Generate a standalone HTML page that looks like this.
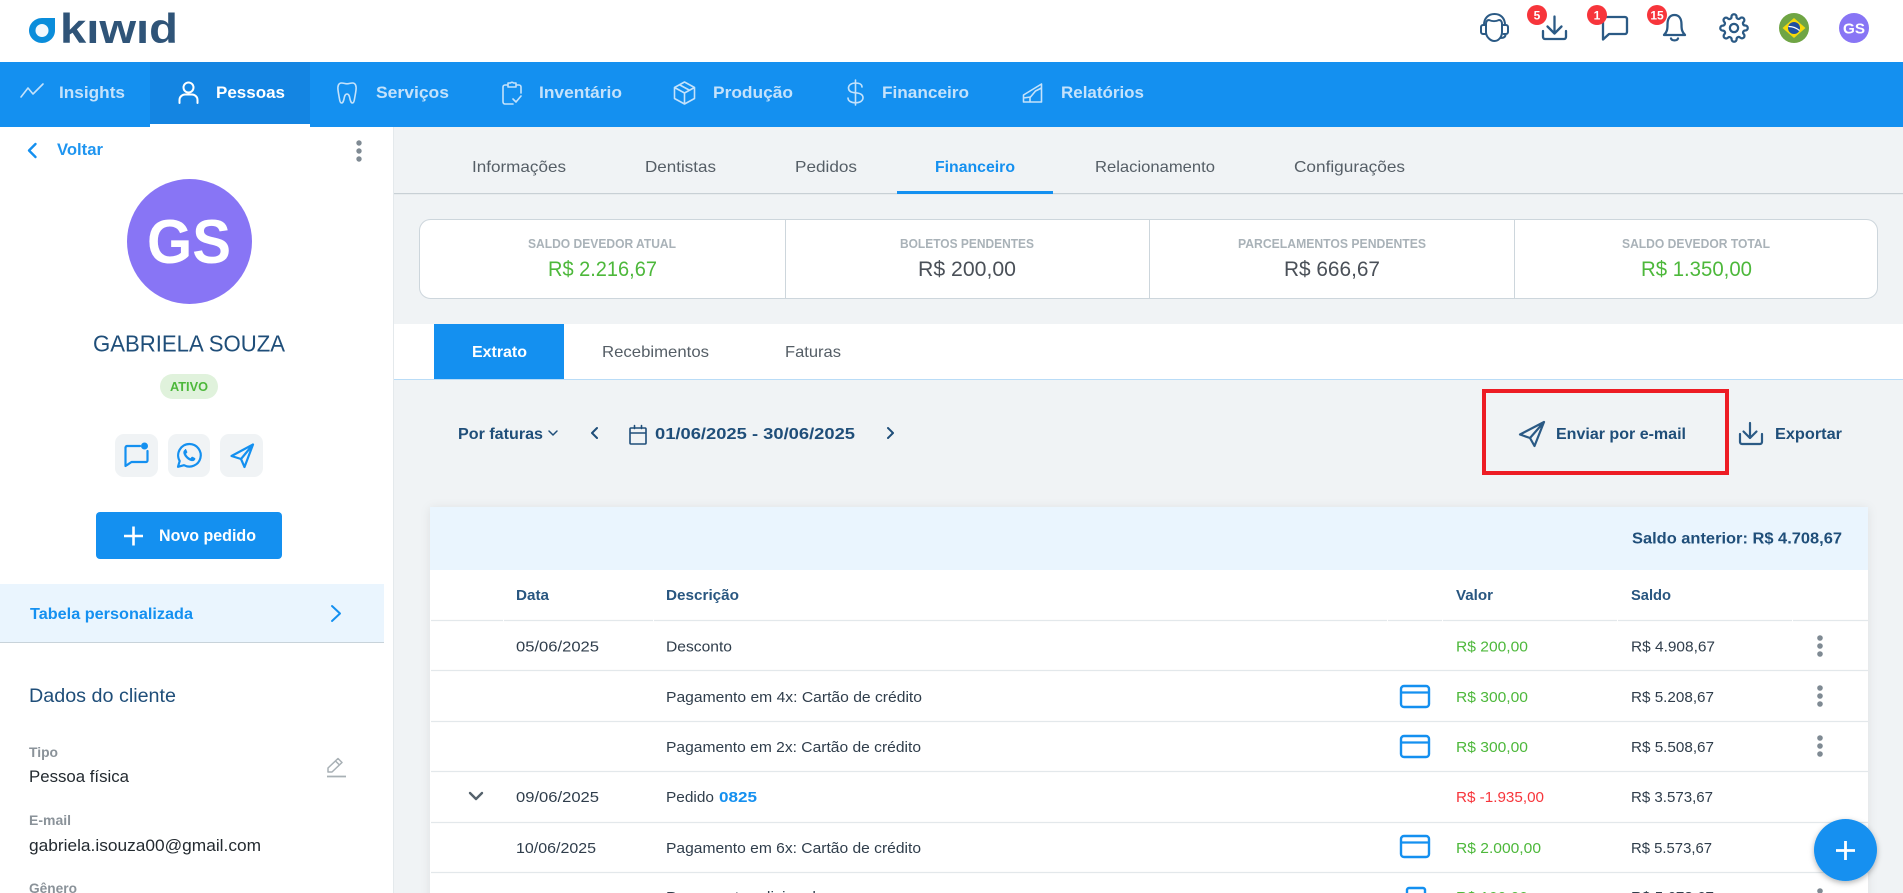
<!DOCTYPE html>
<html lang="pt-BR"><head><meta charset="utf-8"><title>Kiwid</title>
<style>
html,body{margin:0;padding:0;width:1903px;height:893px;overflow:hidden;background:#f0f3f5}
svg{display:block;font-family:"Liberation Sans",Arial,sans-serif}
.nav{font-size:17px;font-weight:700;fill:#c4e2fb}
.tab{font-size:16px;fill:#555e66}
.lab{font-size:12.5px;font-weight:700;fill:#a9b2b8}
.val{font-size:21px;fill:#4a5058}
.g{fill:#4db83b}
.nb{font-size:16px;font-weight:700;fill:#1f4e79}
.th{font-size:15px;font-weight:700;fill:#285680}
.td{font-size:15px;fill:#2f3d4b}
.tv{font-size:15px;fill:#4db83b}
.sl{font-size:13.5px;font-weight:700;fill:#8a9299}
.sv{font-size:17px;fill:#232a30}
.nic{fill:none;stroke:#c4e2fb;stroke-width:1.6;stroke-linecap:round;stroke-linejoin:round}
.tic{fill:none;stroke:#2b5a85;stroke-width:2.3;stroke-linecap:round;stroke-linejoin:round}
.bic{fill:none;stroke:#1490f0;stroke-width:2.2;stroke-linecap:round;stroke-linejoin:round}
.bdg{font-size:12px;font-weight:700;fill:#fff;text-anchor:middle}
.ln{stroke:#e3e8eb;stroke-width:1.2}
</style></head><body>
<svg width="1903" height="893" viewBox="0 0 1903 893" xmlns="http://www.w3.org/2000/svg">
<defs>
<filter id="sh" x="-5%" y="-5%" width="110%" height="110%"><feDropShadow dx="0" dy="1" stdDeviation="5" flood-color="#000" flood-opacity=".08"/></filter>
<filter id="fs" x="-30%" y="-30%" width="160%" height="160%"><feDropShadow dx="0" dy="2" stdDeviation="3" flood-color="#000" flood-opacity=".3"/></filter>
<g id="card"><rect x="1401" y="0" width="28" height="21" rx="3" fill="none" stroke="#1490f0" stroke-width="2.4"/><path d="M1401 6.500h28" stroke="#1490f0" stroke-width="2.200"/></g>
<g id="keb" fill="#7f8a93"><circle cx="1820" cy="0" r="2.800"/><circle cx="1820" cy="8" r="2.800"/><circle cx="1820" cy="16" r="2.800"/></g>
</defs>

<!-- base -->
<rect width="1903" height="893" fill="#f0f3f5"/>
<rect width="1903" height="62" fill="#fff"/>

<!-- logo -->
<path d="M42 18C35 18 29 23.500 29 30.500S35 43 42 43s13-5.500 13-12.500V18z" fill="#0a8ddb"/>
<circle cx="42" cy="30.500" r="6.500" fill="#f2f8fd"/>
<text x="60" y="43" font-size="42" font-weight="700" fill="#2f5478" textLength="118" lengthAdjust="spacingAndGlyphs">kıwıd</text>

<!-- top icons -->
<g class="tic">
<path d="M1484 25c0-7 4.500-11 10.500-11s10.500 4 10.500 11" stroke-width="2"/>
<path d="M1486 24c0-3 1.500-4 3-4 3 1.500 7 1.500 10 0 1.500 0 3 1 3 4v8c0 5-3.500 9-7.500 9s-8.500-4-8.500-9z" stroke-width="2"/>
<path d="M1485.500 25h-2.500a2 2 0 0 0-2 2v5a2 2 0 0 0 2 2h2.500M1503.500 25h2.500a2 2 0 0 1 2 2v5a2 2 0 0 1-2 2h-2.500M1505.500 34.500c0 2.500-2 3.500-5 3.500" stroke-width="2"/>
<path d="M1554.500 16.500V33M1547.500 26.500l7 7 7-7M1543 31v6a2 2 0 0 0 2 2h19a2 2 0 0 0 2-2v-6"/>
<path d="M1603 39.500V19a2 2 0 0 1 2-2h20a2 2 0 0 1 2 2v13a2 2 0 0 1-2 2h-16z"/>
<path d="M1664 35c3-3 3.500-5.500 3.500-10.500 0-6 2.500-9.500 7-9.500s7 3.500 7 9.500c0 5 .5 7.500 3.500 10.500zM1671 38.500c1 2.500 6 2.500 7 0"/>
<g transform="translate(1719 13) scale(1.25)" stroke-width="1.800"><circle cx="12" cy="12" r="3.300"/><path d="M19.400 15a1.650 1.650 0 0 0 .33 1.820l.06.06a2 2 0 0 1 0 2.830 2 2 0 0 1-2.830 0l-.06-.06a1.650 1.650 0 0 0-1.820-.33 1.650 1.650 0 0 0-1 1.510V21a2 2 0 0 1-2 2 2 2 0 0 1-2-2v-.09A1.650 1.650 0 0 0 9 19.400a1.650 1.650 0 0 0-1.820.33l-.06.06a2 2 0 0 1-2.830 0 2 2 0 0 1 0-2.830l.06-.06a1.650 1.650 0 0 0 .33-1.820 1.650 1.650 0 0 0-1.510-1H3a2 2 0 0 1-2-2 2 2 0 0 1 2-2h.09A1.650 1.650 0 0 0 4.600 9a1.650 1.650 0 0 0-.33-1.820l-.06-.06a2 2 0 0 1 0-2.830 2 2 0 0 1 2.830 0l.06.06a1.650 1.650 0 0 0 1.820.33H9a1.650 1.650 0 0 0 1-1.510V3a2 2 0 0 1 2-2 2 2 0 0 1 2 2v.09a1.650 1.650 0 0 0 1 1.510 1.650 1.650 0 0 0 1.820-.33l.06-.06a2 2 0 0 1 2.830 0 2 2 0 0 1 0 2.830l-.06.06a1.650 1.650 0 0 0-.33 1.820V9a1.650 1.650 0 0 0 1.510 1H21a2 2 0 0 1 2 2 2 2 0 0 1-2 2h-.09a1.650 1.650 0 0 0-1.510 1z"/></g>
</g>
<circle cx="1537" cy="15" r="10" fill="#f7353b"/><text class="bdg" x="1537" y="19.500">5</text>
<circle cx="1597" cy="15" r="10" fill="#f7353b"/><text class="bdg" x="1597" y="19.500">1</text>
<circle cx="1657" cy="15" r="10" fill="#f7353b"/><text class="bdg" x="1657" y="19.500">15</text>
<circle cx="1794" cy="28" r="15" fill="#6fa544"/><path d="M1794 18l11.500 10-11.500 10-11.500-10z" fill="#f5d90a"/><circle cx="1794" cy="28" r="6" fill="#1f4fa0"/><path d="M1788.500 26.500c4 0 8 1.500 11 4" stroke="#fff" stroke-width="1.300" fill="none"/>
<circle cx="1854" cy="28" r="15" fill="#8875f5"/><text x="1843" y="33.500" font-size="15" font-weight="700" fill="#fff" textLength="22" lengthAdjust="spacingAndGlyphs">GS</text>

<!-- nav -->
<rect y="62" width="1903" height="65" fill="#1490f0"/>
<rect x="150" y="62" width="160" height="65" fill="#1485e2"/>
<rect x="150" y="124" width="160" height="3" fill="#fff"/>
<path class="nic" d="M21 97l7-9 5 6 10-10" stroke-width="2"/>
<text class="nav" x="59" y="98" textLength="66" lengthAdjust="spacingAndGlyphs">Insights</text>
<g fill="none" stroke="#fff" stroke-width="2" stroke-linecap="round"><circle cx="188.500" cy="87.500" r="5"/><path d="M179.500 103v-3a5.500 5.500 0 0 1 5.500-5.500h7a5.500 5.500 0 0 1 5.500 5.500v3"/></g>
<text x="216" y="98" font-size="17" font-weight="700" fill="#fff" textLength="69" lengthAdjust="spacingAndGlyphs">Pessoas</text>
<path class="nic" d="M342.500 83c-3 0-4 3-3.500 7 .5 4 1 6 1.500 9 .3 2 .8 4 2 4 1.500 0 2-2 2.500-4 .4-2 .8-5 3-5s2.600 3 3 5c.5 2 1 4 2.500 4 1.200 0 1.700-2 2-4 .5-3 1-5 1.500-9 .5-4-.5-7-3.500-7-2.500 0-3 .8-5.500.8s-3-.8-5.500-.8z" transform="translate(-1)"/>
<text class="nav" x="376" y="98" textLength="73" lengthAdjust="spacingAndGlyphs">Serviços</text>
<path class="nic" d="M508 85h-3a2 2 0 0 0-2 2v15a2 2 0 0 0 2 2h8M516 85h3a2 2 0 0 1 2 2v6M508 85v-2h2.500a2 2 0 0 1 3 0h2.500v4h-8zM513 99l3 3 5-6"/>
<text class="nav" x="539" y="98" textLength="83" lengthAdjust="spacingAndGlyphs">Inventário</text>
<path class="nic" d="M684.500 82l10 5.500v11l-10 5.500-10-5.500v-11zM674.500 87.500l10 5.500 10-5.500M684.500 93v11M679.500 84.750l10 5.500"/>
<text class="nav" x="713" y="98" textLength="80" lengthAdjust="spacingAndGlyphs">Produção</text>
<path class="nic" d="M855.500 80v25M862 87c0-2.500-2.500-4-6.500-4s-7 2-7 5 2.500 4.500 7 4.800 7.500 2 7.500 5-3 5-7.500 5-7.500-2-7.500-4.800"/>
<text class="nav" x="882" y="98" textLength="87" lengthAdjust="spacingAndGlyphs">Financeiro</text>
<path class="nic" d="M1023.500 102v-7l18-11v18zM1023.500 98l7-1 5-6 6-3M1030 102v-5"/>
<text class="nav" x="1061" y="98" textLength="83" lengthAdjust="spacingAndGlyphs">Relatórios</text>

<!-- sidebar -->
<rect y="127" width="393" height="766" fill="#fff"/>
<rect x="393" y="127" width="1" height="766" fill="#e4e9ec"/>
<path d="M35.500 144l-6.500 6.500 6.500 6.500" fill="none" stroke="#1490f0" stroke-width="2.400" stroke-linecap="round" stroke-linejoin="round"/>
<text x="57" y="155" font-size="16.500" fill="#1490f0" textLength="46" lengthAdjust="spacingAndGlyphs" font-weight="700" opacity=".95">Voltar</text>
<g fill="#7f8a93"><circle cx="359" cy="143" r="2.700"/><circle cx="359" cy="151" r="2.700"/><circle cx="359" cy="159" r="2.700"/></g>
<circle cx="189.500" cy="241.500" r="62.500" fill="#8875f5"/>
<text x="147" y="263" font-size="62" font-weight="700" fill="#fff" textLength="84" lengthAdjust="spacingAndGlyphs">GS</text>
<text x="93" y="351.500" font-size="23" fill="#1f4e79" textLength="192" lengthAdjust="spacingAndGlyphs">GABRIELA SOUZA</text>
<rect x="160" y="374" width="58" height="25" rx="12.500" fill="#e0f2dc"/>
<text x="170" y="391" font-size="13" font-weight="700" fill="#4db83b" textLength="38" lengthAdjust="spacingAndGlyphs">ATIVO</text>
<rect x="115" y="434" width="43" height="43" rx="9" fill="#f0f3f5"/>
<rect x="168" y="434" width="42" height="43" rx="9" fill="#f0f3f5"/>
<rect x="220" y="434" width="43" height="43" rx="9" fill="#f0f3f5"/>
<path class="bic" d="M140 446h-13a2 2 0 0 0-1.500 1.500V466l6-4h14.500a1.500 1.500 0 0 0 1.500-1.500V451"/>
<circle cx="144.500" cy="446" r="3.500" fill="#1490f0"/>
<path class="bic" d="M189.500 444a11.300 11.300 0 0 0-9.800 17l-1.700 5.800 6-1.600a11.300 11.300 0 1 0 5.500-21.200z"/>
<path d="M185 449.500c-1.500 1-2 2.500-1.500 4.300 1 3.200 4 6.200 7.500 7.200 2 .5 3.500-.2 4.300-1.800.2-.5 0-1-.4-1.200l-2.300-1.200c-.5-.2-.9-.1-1.200.3l-.9 1.100c-2-.8-3.600-2.300-4.500-4.300l1-1c.3-.3.4-.7.200-1.100l-1-2.300c-.2-.5-.8-.6-1.200-.2z" fill="#1490f0"/>
<path class="bic" d="M253 444.500l-21.500 11.500 9.500 3 3.500 8zM253 444.500l-12 14.500"/>
<rect x="96" y="512" width="186" height="47" rx="4" fill="#1490f0"/>
<path d="M124 536h19M133.500 526.500v19" stroke="#fff" stroke-width="2.600"/>
<text x="159" y="541" font-size="17" font-weight="700" fill="#fff" textLength="97" lengthAdjust="spacingAndGlyphs">Novo pedido</text>
<rect y="584" width="384" height="58" fill="#eaf5fe"/>
<rect y="642" width="384" height="1" fill="#c8d3da"/>
<text x="30" y="619" font-size="16" font-weight="700" fill="#1490f0" textLength="163" lengthAdjust="spacingAndGlyphs">Tabela personalizada</text>
<path d="M332 606l8 7.500-8 7.500" fill="none" stroke="#1490f0" stroke-width="2" stroke-linecap="round" stroke-linejoin="round"/>
<text x="29" y="702" font-size="19" fill="#1f4e79" textLength="147" lengthAdjust="spacingAndGlyphs">Dados do cliente</text>
<text class="sl" x="29" y="757" textLength="29" lengthAdjust="spacingAndGlyphs">Tipo</text>
<text class="sv" x="29" y="782" textLength="100" lengthAdjust="spacingAndGlyphs">Pessoa física</text>
<path d="M328 772v-4l10-9.500 4 4-10 9.500zM335.500 761l4 4" fill="none" stroke="#a8b0b5" stroke-width="1.500" stroke-linejoin="round"/>
<path d="M327 776.500h19" stroke="#a8b0b5" stroke-width="1.700"/>
<text class="sl" x="29" y="825" textLength="42" lengthAdjust="spacingAndGlyphs">E-mail</text>
<text class="sv" x="29" y="851" textLength="232" lengthAdjust="spacingAndGlyphs">gabriela.isouza00@gmail.com</text>
<text class="sl" x="29" y="893" textLength="48" lengthAdjust="spacingAndGlyphs">Gênero</text>

<!-- main tabs -->
<rect x="394" y="193" width="1509" height="1.200" fill="#c8d0d5"/>
<rect x="897" y="191" width="156" height="3" fill="#1490f0"/>
<text class="tab" x="472" y="172" textLength="94" lengthAdjust="spacingAndGlyphs">Informações</text>
<text class="tab" x="645" y="172" textLength="71" lengthAdjust="spacingAndGlyphs">Dentistas</text>
<text class="tab" x="795" y="172" textLength="62" lengthAdjust="spacingAndGlyphs">Pedidos</text>
<text x="935" y="172" font-size="16" font-weight="700" fill="#1490f0" textLength="80" lengthAdjust="spacingAndGlyphs">Financeiro</text>
<text class="tab" x="1095" y="172" textLength="120" lengthAdjust="spacingAndGlyphs">Relacionamento</text>
<text class="tab" x="1294" y="172" textLength="111" lengthAdjust="spacingAndGlyphs">Configurações</text>

<!-- summary -->
<rect x="419.500" y="219.500" width="1458" height="79" rx="11" fill="#fff" stroke="#cdd6dc"/>
<path d="M785.500 220v78M1149.500 220v78M1514.500 220v78" stroke="#cdd6dc"/>
<text class="lab" x="528" y="248" textLength="148" lengthAdjust="spacingAndGlyphs">SALDO DEVEDOR ATUAL</text>
<text class="val g" x="548" y="276" textLength="109" lengthAdjust="spacingAndGlyphs">R$ 2.216,67</text>
<text class="lab" x="900" y="248" textLength="134" lengthAdjust="spacingAndGlyphs">BOLETOS PENDENTES</text>
<text class="val" x="918" y="276" textLength="98" lengthAdjust="spacingAndGlyphs">R$ 200,00</text>
<text class="lab" x="1238" y="248" textLength="188" lengthAdjust="spacingAndGlyphs">PARCELAMENTOS PENDENTES</text>
<text class="val" x="1284" y="276" textLength="96" lengthAdjust="spacingAndGlyphs">R$ 666,67</text>
<text class="lab" x="1622" y="248" textLength="148" lengthAdjust="spacingAndGlyphs">SALDO DEVEDOR TOTAL</text>
<text class="val g" x="1641" y="276" textLength="111" lengthAdjust="spacingAndGlyphs">R$ 1.350,00</text>

<!-- subtabs -->
<rect x="394" y="324" width="1509" height="55" fill="#fff"/>
<rect x="394" y="379" width="1509" height="1" fill="#b9dcf7"/>
<rect x="434" y="324" width="130" height="55" fill="#1490f0"/>
<text x="472" y="357" font-size="16" font-weight="700" fill="#fff" textLength="55" lengthAdjust="spacingAndGlyphs">Extrato</text>
<text class="tab" x="602" y="357" textLength="107" lengthAdjust="spacingAndGlyphs">Recebimentos</text>
<text class="tab" x="785" y="357" textLength="56" lengthAdjust="spacingAndGlyphs">Faturas</text>

<!-- filters -->
<text class="nb" x="458" y="439" textLength="85" lengthAdjust="spacingAndGlyphs">Por faturas</text>
<path d="M549 431l4 4 4-4" fill="none" stroke="#1f4e79" stroke-width="1.500" stroke-linecap="round" stroke-linejoin="round"/>
<path d="M597 428l-5 5 5 5M888 428l5 5-5 5" fill="none" stroke="#1f4e79" stroke-width="2" stroke-linecap="round" stroke-linejoin="round"/>
<path d="M631 428h14a1 1 0 0 1 1 1v14a1 1 0 0 1-1 1h-14a1 1 0 0 1-1-1v-14a1 1 0 0 1 1-1zM630 433h16M634.500 425.500v3M641.500 425.500v3" fill="none" stroke="#1f4e79" stroke-width="1.600" stroke-linecap="round"/>
<text class="nb" x="655" y="439" textLength="200" lengthAdjust="spacingAndGlyphs">01/06/2025 - 30/06/2025</text>
<path d="M1544 422l-24 12.500 10 3.500 4.500 8zM1544 422l-14 16" fill="none" stroke="#2b5a85" stroke-width="2.200" stroke-linejoin="round" stroke-linecap="round"/>
<text class="nb" x="1556" y="439" textLength="130" lengthAdjust="spacingAndGlyphs">Enviar por e-mail</text>
<rect x="1484" y="391" width="243" height="82" fill="none" stroke="#ed1c24" stroke-width="4"/>
<path d="M1750 423v15M1743.500 431.500l6.500 6.500 6.500-6.500M1740 434v8a2 2 0 0 0 2 2h18a2 2 0 0 0 2-2v-8" fill="none" stroke="#2b5a85" stroke-width="2.200" stroke-linecap="round" stroke-linejoin="round"/>
<text class="nb" x="1775" y="439" textLength="67" lengthAdjust="spacingAndGlyphs">Exportar</text>

<!-- table -->
<rect x="430" y="507" width="1438" height="420" fill="#fff" filter="url(#sh)"/>
<rect x="430" y="507" width="1438" height="63" fill="#eaf5fe"/>
<text class="nb" x="1632" y="543.500" textLength="210" lengthAdjust="spacingAndGlyphs">Saldo anterior: R$ 4.708,67</text>
<text class="th" x="516" y="600" textLength="33" lengthAdjust="spacingAndGlyphs">Data</text>
<text class="th" x="666" y="600" textLength="73" lengthAdjust="spacingAndGlyphs">Descrição</text>
<text class="th" x="1456" y="600" textLength="37" lengthAdjust="spacingAndGlyphs">Valor</text>
<text class="th" x="1631" y="600" textLength="40" lengthAdjust="spacingAndGlyphs">Saldo</text>
<path class="ln" d="M431 620.500h72M504 620.500h149M654 620.500h733M1388 620.500h54M1443 620.500h174M1618 620.500h174M1793 620.500h75M431 670.500h1437M431 721.500h1437M431 771.500h1437M431 822.500h1437M431 872.500h1437"/>

<text class="td" x="516" y="651.500" textLength="83" lengthAdjust="spacingAndGlyphs">05/06/2025</text>
<text class="td" x="666" y="651.500" textLength="66" lengthAdjust="spacingAndGlyphs">Desconto</text>
<text class="tv" x="1456" y="651.500" textLength="72" lengthAdjust="spacingAndGlyphs">R$ 200,00</text>
<text class="td" x="1631" y="651.500" textLength="84" lengthAdjust="spacingAndGlyphs">R$ 4.908,67</text>
<use href="#keb" y="638"/>

<text class="td" x="666" y="702" textLength="256" lengthAdjust="spacingAndGlyphs">Pagamento em 4x: Cartão de crédito</text>
<use href="#card" y="686"/>
<text class="tv" x="1456" y="702" textLength="72" lengthAdjust="spacingAndGlyphs">R$ 300,00</text>
<text class="td" x="1631" y="702" textLength="83" lengthAdjust="spacingAndGlyphs">R$ 5.208,67</text>
<use href="#keb" y="688"/>

<text class="td" x="666" y="752" textLength="255" lengthAdjust="spacingAndGlyphs">Pagamento em 2x: Cartão de crédito</text>
<use href="#card" y="736"/>
<text class="tv" x="1456" y="752" textLength="72" lengthAdjust="spacingAndGlyphs">R$ 300,00</text>
<text class="td" x="1631" y="752" textLength="83" lengthAdjust="spacingAndGlyphs">R$ 5.508,67</text>
<use href="#keb" y="738"/>

<path d="M470 793l6 6 6-6" fill="none" stroke="#55626c" stroke-width="2.400" stroke-linecap="round" stroke-linejoin="round"/>
<text class="td" x="516" y="802" textLength="83" lengthAdjust="spacingAndGlyphs">09/06/2025</text>
<text class="td" x="666" y="802" textLength="48" lengthAdjust="spacingAndGlyphs">Pedido</text>
<text x="719" y="802" font-size="15" font-weight="700" fill="#1490f0" textLength="38" lengthAdjust="spacingAndGlyphs">0825</text>
<text x="1456" y="802" font-size="15" fill="#f7353b" textLength="88" lengthAdjust="spacingAndGlyphs">R$ -1.935,00</text>
<text class="td" x="1631" y="802" textLength="82" lengthAdjust="spacingAndGlyphs">R$ 3.573,67</text>

<text class="td" x="516" y="853" textLength="80" lengthAdjust="spacingAndGlyphs">10/06/2025</text>
<text class="td" x="666" y="853" textLength="255" lengthAdjust="spacingAndGlyphs">Pagamento em 6x: Cartão de crédito</text>
<use href="#card" y="836"/>
<text class="tv" x="1456" y="853" textLength="85" lengthAdjust="spacingAndGlyphs">R$ 2.000,00</text>
<text class="td" x="1631" y="853" textLength="81" lengthAdjust="spacingAndGlyphs">R$ 5.573,67</text>

<text class="td" x="666" y="902" textLength="150" lengthAdjust="spacingAndGlyphs">Pagamento adicional</text>
<rect x="1407" y="888" width="18" height="14" rx="2" fill="none" stroke="#1490f0" stroke-width="2.400"/>
<text class="tv" x="1456" y="902" textLength="72" lengthAdjust="spacingAndGlyphs">R$ 100,00</text>
<text class="td" x="1631" y="902" textLength="83" lengthAdjust="spacingAndGlyphs">R$ 5.673,67</text>
<use href="#keb" y="891"/>

<!-- fab -->
<ellipse cx="1845.500" cy="850" rx="31.500" ry="31" fill="#1490f0" filter="url(#fs)"/>
<path d="M1836 850.500h19M1845.500 841v19" stroke="#fff" stroke-width="2.800"/>
</svg>
</body></html>
